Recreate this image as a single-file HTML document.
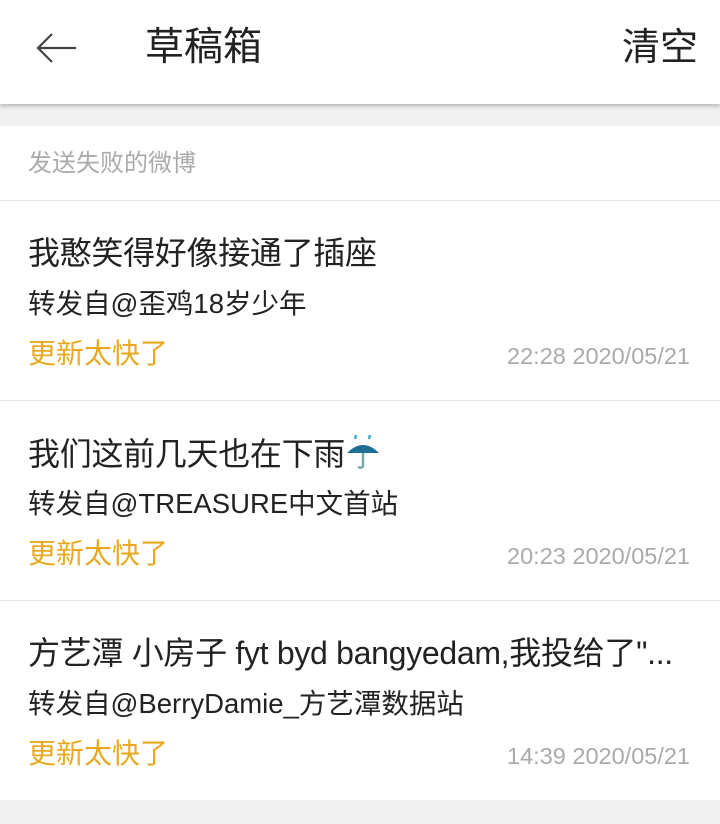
<!DOCTYPE html>
<html><head><meta charset="utf-8"><style>
*{margin:0;padding:0;box-sizing:border-box}
body{width:720px;height:824px;background:#f0f0f0;font-family:"Liberation Sans","Noto Sans CJK SC",sans-serif;overflow:hidden;position:relative}
.hdr{position:absolute;left:0;top:0;width:720px;height:104px;background:#fff;box-shadow:0 2px 4px rgba(0,0,0,.25)}
.t{position:absolute;left:145px;top:24px;font-size:39px;color:#222;line-height:48px}
.clr{position:absolute;right:22px;top:24px;font-size:38px;color:#222;line-height:48px}
.sec{position:absolute;left:0;top:126px;width:720px;height:674px;background:#fff}
.lbl{position:absolute;left:28px;top:24px;font-size:24px;color:#aaa;line-height:28px}
.item{position:absolute;left:0;width:720px;height:200px;border-top:1px solid #e6e6e6}
.a{position:absolute;left:28px;top:32px;font-size:32px;color:#222;line-height:40px;white-space:nowrap;letter-spacing:-0.3px}
.b{position:absolute;left:28px;top:86px;font-size:27.5px;color:#222;line-height:34px;white-space:nowrap}
.c{position:absolute;left:28px;top:135px;font-size:28px;color:#e9a91f;line-height:36px}
.d{position:absolute;right:30px;top:140px;font-size:23.5px;color:#aaa;line-height:30px}
</style></head><body>
<div class="hdr">
<svg style="position:absolute;left:34px;top:30px" width="44" height="36" viewBox="0 0 44 36"><path d="M18 4 L4 18 L18 32 M4 18 H42" fill="none" stroke="#444" stroke-width="2.2"/></svg>
<div class="t">草稿箱</div><div class="clr">清空</div>
</div>
<div class="sec">
<div class="lbl">发送失败的微博</div>
<div class="item" style="top:74px">
<div class="a">我憨笑得好像接通了插座</div>
<div class="b">转发自@歪鸡18岁少年</div>
<div class="c">更新太快了</div><div class="d">22:28 2020/05/21</div>
</div>
<div class="item" style="top:274px">
<div class="a">我们这前几天也在下雨<svg width="36" height="38" viewBox="0 0 36 38" style="vertical-align:-6px"><path d="M2 20 Q18 4 34 20 Z" fill="#1d6f95"/><path d="M18 20 V32 Q18 36 13 34" fill="none" stroke="#7aa" stroke-width="2.5"/><path d="M11 2 l-1 4 M25 2 l-1 4" stroke="#4aa8d8" stroke-width="2.5"/></svg></div>
<div class="b">转发自@TREASURE中文首站</div>
<div class="c">更新太快了</div><div class="d">20:23 2020/05/21</div>
</div>
<div class="item" style="top:474px">
<div class="a">方艺潭 小房子 fyt byd bangyedam,我投给了"...</div>
<div class="b">转发自@BerryDamie_方艺潭数据站</div>
<div class="c">更新太快了</div><div class="d">14:39 2020/05/21</div>
</div>
</div>
</body></html>
